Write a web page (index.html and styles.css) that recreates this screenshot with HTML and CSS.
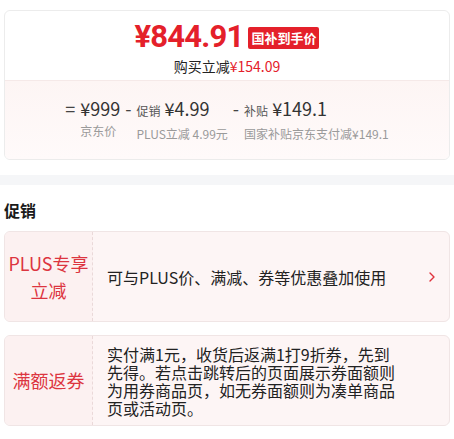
FILE: index.html
```html
<!DOCTYPE html>
<html lang="zh-CN">
<head>
<meta charset="utf-8">
<title>价格</title>
<link rel="stylesheet" href="styles.css">
</head>
<body>
<div class="price-card">
  <div class="price-top">
    <div class="price-main">
      <span class="price-amount">¥844.91</span>
      <span class="price-badge">国补到手价</span>
    </div>
    <div class="price-save">购买立减<span class="red">¥154.09</span></div>
  </div>
  <div class="price-bottom">
    <div class="calc">
      <div class="term">
        <span class="op">=</span>
        <div class="stack">
          <div class="val"><span class="num">¥999</span></div>
          <div class="sub">京东价</div>
        </div>
      </div>
      <div class="term">
        <span class="op">-</span>
        <div class="stack">
          <div class="val"><span class="tag">促销</span><span class="num">¥4.99</span></div>
          <div class="sub">PLUS立减 4.99元</div>
        </div>
      </div>
      <div class="term">
        <span class="op">-</span>
        <div class="stack">
          <div class="val"><span class="tag">补贴</span><span class="num">¥149.1</span></div>
          <div class="sub">国家补贴京东支付减¥149.1</div>
        </div>
      </div>
    </div>
  </div>
</div>

<div class="band"></div>

<h2 class="section-title">促销</h2>

<div class="promo">
  <div class="promo-label">PLUS专享立减</div>
  <div class="promo-body has-arrow">
    <div class="promo-text">可与PLUS价、满减、券等优惠叠加使用</div>
    <svg class="arrow" width="8" height="12" viewBox="0 0 8 12"><path d="M2 2 L6 6 L2 10" fill="none" stroke="#e0323c" stroke-width="1.4" stroke-linecap="round" stroke-linejoin="round"/></svg>
  </div>
</div>

<div class="promo">
  <div class="promo-label">满额返券</div>
  <div class="promo-body">
    <div class="promo-text">实付满1元，收货后返满1打9折券，先到先得。若点击跳转后的页面展示券面额则为用券商品页，如无券面额则为凑单商品页或活动页。</div>
  </div>
</div>
</body>
</html>
```

FILE: styles.css
```css
* { box-sizing: border-box; }

body {
  margin: 0;
  background: #fff;
  font-family: "Noto Sans CJK SC", "Noto Sans", sans-serif;
  color: #1a1a1a;
}

.red { color: #e4202a; }

.price-card {
  margin: 10px 4px 0;
  border: 1px solid #ececec;
  border-radius: 6px;
  overflow: hidden;
}

.price-top {
  display: flex;
  flex-direction: column;
  align-items: center;
  padding: 8px 0 4px;
}

.price-main {
  display: flex;
  align-items: center;
  gap: 5px;
  height: 36px;
}

.price-amount {
  font-family: Roboto, "Noto Sans CJK SC", sans-serif;
  font-size: 31px;
  font-weight: 700;
  color: #e4202a;
  line-height: 34px;
  letter-spacing: -0.8px;
}

.price-badge {
  background: #e4202a;
  color: #fff;
  font-size: 13px;
  font-weight: 700;
  line-height: 22px;
  padding: 0 3px;
  border-radius: 2px;
  margin-top: 2px;
}

.price-save {
  margin-top: 1px;
  font-size: 14px;
  line-height: 20px;
  color: #222;
}

.price-bottom {
  border-top: 1px solid #f5e9e8;
  background: linear-gradient(#fdf5f4, #fffafa);
  padding: 15px 0 16px;
}

.calc {
  display: flex;
  justify-content: center;
  gap: 5px;
}

.term {
  display: flex;
  align-items: flex-start;
}

.op {
  font-size: 18px;
  line-height: 24px;
  color: #444;
  margin-right: 5px;
}

.stack {
  display: flex;
  flex-direction: column;
}

.val {
  display: flex;
  align-items: baseline;
  line-height: 24px;
  white-space: nowrap;
}

.tag {
  font-size: 12px;
  color: #555;
  margin-right: 4px;
}

.num {
  font-size: 18px;
  color: #333;
}

.sub {
  margin-top: 2px;
  font-size: 12px;
  line-height: 18px;
  color: #9a9a9a;
  white-space: nowrap;
}

.band {
  margin-top: 15px;
  height: 10px;
  background: #f5f6f8;
}

.section-title {
  margin: 13px 0 0 4px;
  font-size: 16px;
  font-weight: 700;
  line-height: 24px;
  color: #1a1a1a;
}

.promo {
  display: flex;
  margin: 9px 4px 0;
  min-height: 91px;
  border: 1px solid #f0e5e5;
  border-radius: 6px;
  background: #fdf5f5;
  overflow: hidden;
}

.promo + .promo { margin-top: 13px; }

.promo-label {
  flex: 0 0 88px;
  display: flex;
  align-items: center;
  justify-content: center;
  text-align: center;
  padding: 0 3px;
  border-right: 1px dashed #ead9d9;
  background: #fcf1f1;
  font-size: 18px;
  line-height: 27px;
  color: #dc3540;
}

.promo-body {
  flex: 1;
  display: flex;
  align-items: center;
  padding: 0 48px 0 14px;
}

.promo-body.has-arrow { padding-right: 13px; }

.promo-text {
  flex: 1;
  font-size: 16px;
  line-height: 18px;
  color: #222;
}

.arrow {
  flex: 0 0 8px;
  margin-left: 27px;
}
```
